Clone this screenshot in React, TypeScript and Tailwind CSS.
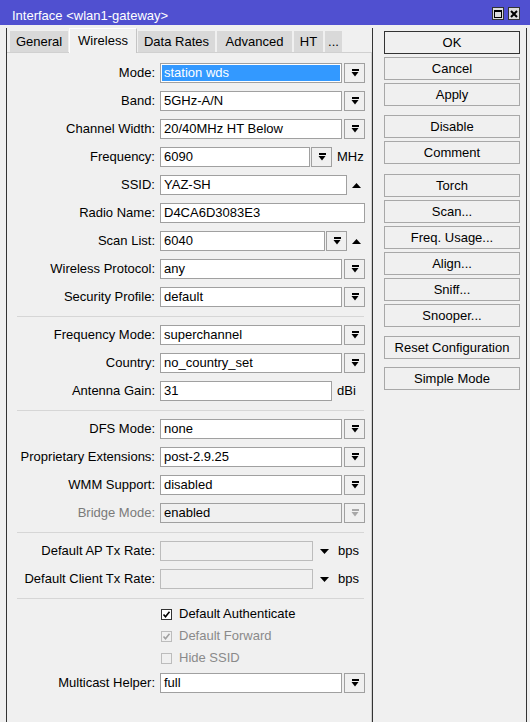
import React from "react";

const DropIcon = ({ disabled }: { disabled?: boolean }) => (
  <svg width="8" height="8" viewBox="0 0 8 8" shapeRendering="crispEdges">
    <rect x="0.5" y="0" width="7" height="1.5" fill={disabled ? "#a8a8a8" : "#000"} />
    <polygon points="0.5,3 7.5,3 4,7.5" fill={disabled ? "#a8a8a8" : "#000"} shapeRendering="geometricPrecision" />
  </svg>
);

const DropBtn = ({ disabled, className = "" }: { disabled?: boolean; className?: string }) => (
  <div className={`w-[21px] h-[20px] shrink-0 border border-[#a0a0a0] bg-[#f0f0f0] flex items-center justify-center ${className}`}>
    <DropIcon disabled={disabled} />
  </div>
);

const UpTri = () => (
  <svg width="9" height="5" viewBox="0 0 9 5">
    <polygon points="0,5 9,5 4.5,0" fill="#000" />
  </svg>
);

const DownTri = () => (
  <svg width="9" height="5" viewBox="0 0 9 5">
    <polygon points="0,0 9,0 4.5,5" fill="#000" />
  </svg>
);

const Field = ({
  value,
  className,
  variant = "normal",
}: {
  value: string;
  className: string;
  variant?: "normal" | "selected" | "disabled" | "empty";
}) => {
  if (variant === "selected") {
    return (
      <div className={`h-[20px] shrink-0 border border-[#a0a0a0] bg-white p-px ${className}`}>
        <div className="h-full bg-[#3399ff] text-white flex items-center pl-[2px] whitespace-nowrap">{value}</div>
      </div>
    );
  }
  const look =
    variant === "disabled"
      ? "border-[#a0a0a0] bg-[#f0f0f0]"
      : variant === "empty"
      ? "border-[#bcbcbc] bg-[#f0f0f0]"
      : "border-[#a0a0a0] bg-white";
  return (
    <div className={`h-[20px] shrink-0 border ${look} flex items-center pl-[3px] whitespace-nowrap ${className}`}>
      {value}
    </div>
  );
};

const Row = ({
  label,
  disabled,
  children,
}: {
  label: string;
  disabled?: boolean;
  children?: React.ReactNode;
}) => (
  <div className="flex items-center h-[20px]">
    <div
      className={`w-[153px] shrink-0 text-right pr-[5px] whitespace-nowrap ${
        disabled ? "text-[#7a7a7a]" : "text-black"
      }`}
    >
      {label}
    </div>
    <div className="flex items-center">{children}</div>
  </div>
);

const Select = ({
  value,
  variant,
}: {
  value: string;
  variant?: "normal" | "selected" | "disabled";
}) => (
  <>
    <Field value={value} className="w-[182px]" variant={variant} />
    <DropBtn className="ml-[2px]" disabled={variant === "disabled"} />
  </>
);

const Sep = () => <div className="h-px mt-px ml-[10px] w-[347px] bg-[#d6d6d6]" />;

const Check = ({
  label,
  checked,
  disabled,
}: {
  label: string;
  checked?: boolean;
  disabled?: boolean;
}) => (
  <div className="flex items-center h-[22px]">
    <div className="w-[154px] shrink-0" />
    <div
      className={`w-[11px] h-[11px] border flex items-center justify-center ${
        disabled ? "border-[#bcbcbc] bg-[#f0f0f0]" : "border-[#333] bg-white"
      }`}
    >
      {checked && (
        <svg width="9" height="9" viewBox="0 0 9 9">
          <polyline
            points="1.5,4.5 3.5,6.8 7.5,1.8"
            fill="none"
            stroke={disabled ? "#a0a0a0" : "#000"}
            strokeWidth="1.6"
          />
        </svg>
      )}
    </div>
    <div className={`ml-[7px] whitespace-nowrap ${disabled ? "text-[#8a8a8a]" : "text-black"}`}>{label}</div>
  </div>
);

const Btn = ({ label, primary, className = "" }: { label: string; primary?: boolean; className?: string }) => (
  <div
    className={`w-[136px] h-[23px] shrink-0 border ${
      primary ? "border-[#333]" : "border-[#a8a8a8]"
    } bg-[#f0f0f0] flex items-center justify-center whitespace-nowrap ${className}`}
  >
    {label}
  </div>
);

const Tab = ({ label, active, className = "" }: { label: string; active?: boolean; className?: string }) => (
  <div
    className={`flex items-center justify-center whitespace-nowrap shrink-0 ${
      active
        ? "h-[25px] -mb-px bg-[#f0f0f0] border-l border-r border-t border-l-white border-r-[#c4c4c4] border-t-white relative z-10"
        : "h-[21px] bg-[#d9d9d9]"
    } ${className}`}
  >
    {label}
  </div>
);

export default function App() {
  return (
    <div className="w-[530px] h-[722px] overflow-hidden bg-[#f0f0f0] text-black text-[13px] font-['Liberation_Sans',Arial,sans-serif]">
      {/* Title bar */}
      <div className="h-[25px] bg-[#5050d0] flex items-start justify-between pl-[12px] pr-[10px]">
        <div className="mt-[8px] leading-[15px] text-white whitespace-nowrap">Interface &lt;wlan1-gateway&gt;</div>
        <div className="mt-[7px] flex gap-[4px]">
          <div className="w-[12px] h-[13px] border border-[#333] bg-[#dcdcdc] flex items-center justify-center">
            <svg width="8" height="8" viewBox="0 0 8 8" shapeRendering="crispEdges">
              <rect x="0.5" y="0.5" width="7" height="7" fill="none" stroke="#000" strokeWidth="1" />
              <rect x="0" y="0" width="8" height="2" fill="#000" />
            </svg>
          </div>
          <div className="w-[12px] h-[13px] border border-[#333] bg-[#dcdcdc] flex items-center justify-center">
            <svg width="8" height="8" viewBox="0 0 8 8">
              <path d="M1 1 L7 7 M7 1 L1 7" stroke="#000" strokeWidth="2" />
            </svg>
          </div>
        </div>
      </div>

      {/* Body */}
      <div className="flex pt-[3px] h-[697px]">
        <div className="w-[6px] shrink-0" />
        <div className="w-px shrink-0 bg-[#333]" />

        {/* Left: tabs + panel */}
        <div className="w-[365px] shrink-0 flex flex-col">
          <div className="h-[24px] flex items-end pl-[3px]">
            <Tab label="General" className="w-[58px]" />
            <Tab label="Wireless" active className="w-[68px] ml-[1px]" />
            <Tab label="Data Rates" className="w-[77px] ml-[1px]" />
            <Tab label="Advanced" className="w-[75px] ml-[2px]" />
            <Tab label="HT" className="w-[29px] ml-[2px]" />
            <Tab label="..." className="w-[17px] ml-[2px]" />
          </div>
          <div className="flex-1 border-t border-r border-[#d0d0d0] bg-[#f0f0f0] pt-[10px] flex flex-col gap-2">
            <Row label="Mode:">
              <Select value="station wds" variant="selected" />
            </Row>
            <Row label="Band:">
              <Select value="5GHz-A/N" />
            </Row>
            <Row label="Channel Width:">
              <Select value="20/40MHz HT Below" />
            </Row>
            <Row label="Frequency:">
              <Field value="6090" className="w-[150px]" />
              <DropBtn className="ml-[1px]" />
              <span className="ml-[5px]">MHz</span>
            </Row>
            <Row label="SSID:">
              <Field value="YAZ-SH" className="w-[187px]" />
              <div className="w-[18px] flex justify-center">
                <UpTri />
              </div>
            </Row>
            <Row label="Radio Name:">
              <Field value="D4CA6D3083E3" className="w-[205px]" />
            </Row>
            <Row label="Scan List:">
              <Field value="6040" className="w-[165px]" />
              <DropBtn className="ml-px" />
              <div className="w-[18px] flex justify-center">
                <UpTri />
              </div>
            </Row>
            <Row label="Wireless Protocol:">
              <Select value="any" />
            </Row>
            <Row label="Security Profile:">
              <Select value="default" />
            </Row>

            <Sep />

            <Row label="Frequency Mode:">
              <Select value="superchannel" />
            </Row>
            <Row label="Country:">
              <Select value="no_country_set" />
            </Row>
            <Row label="Antenna Gain:">
              <Field value="31" className="w-[172px]" />
              <span className="ml-[5px]">dBi</span>
            </Row>

            <Sep />

            <Row label="DFS Mode:">
              <Select value="none" />
            </Row>
            <Row label="Proprietary Extensions:">
              <Select value="post-2.9.25" />
            </Row>
            <Row label="WMM Support:">
              <Select value="disabled" />
            </Row>
            <Row label="Bridge Mode:" disabled>
              <Select value="enabled" variant="disabled" />
            </Row>

            <Sep />

            <Row label="Default AP Tx Rate:">
              <Field value="" className="w-[153px]" variant="empty" />
              <div className="ml-[7px] flex items-center">
                <DownTri />
              </div>
              <span className="ml-[9px]">bps</span>
            </Row>
            <Row label="Default Client Tx Rate:">
              <Field value="" className="w-[153px]" variant="empty" />
              <div className="ml-[7px] flex items-center">
                <DownTri />
              </div>
              <span className="ml-[9px]">bps</span>
            </Row>

            <Sep />

            <div className="-mt-[4px] flex flex-col">
              <Check label="Default Authenticate" checked />
              <Check label="Default Forward" checked disabled />
              <Check label="Hide SSID" disabled />
              <div className="mt-[4px]">
                <Row label="Multicast Helper:">
                  <Select value="full" />
                </Row>
              </div>
            </div>
          </div>
        </div>

        <div className="w-px shrink-0 bg-[#333]" />

        {/* Right: buttons */}
        <div className="w-[153px] shrink-0 pl-[11px] pt-[3px] flex flex-col gap-[3px]">
          <Btn label="OK" primary />
          <Btn label="Cancel" />
          <Btn label="Apply" />
          <Btn label="Disable" className="mt-[6px]" />
          <Btn label="Comment" />
          <Btn label="Torch" className="mt-[7px]" />
          <Btn label="Scan..." />
          <Btn label="Freq. Usage..." />
          <Btn label="Align..." />
          <Btn label="Sniff..." />
          <Btn label="Snooper..." />
          <Btn label="Reset Configuration" className="mt-[6px]" />
          <Btn label="Simple Mode" className="mt-[5px]" />
        </div>

        <div className="w-px shrink-0 bg-[#333]" />
        <div className="w-[3px] shrink-0" />
      </div>
    </div>
  );
}
